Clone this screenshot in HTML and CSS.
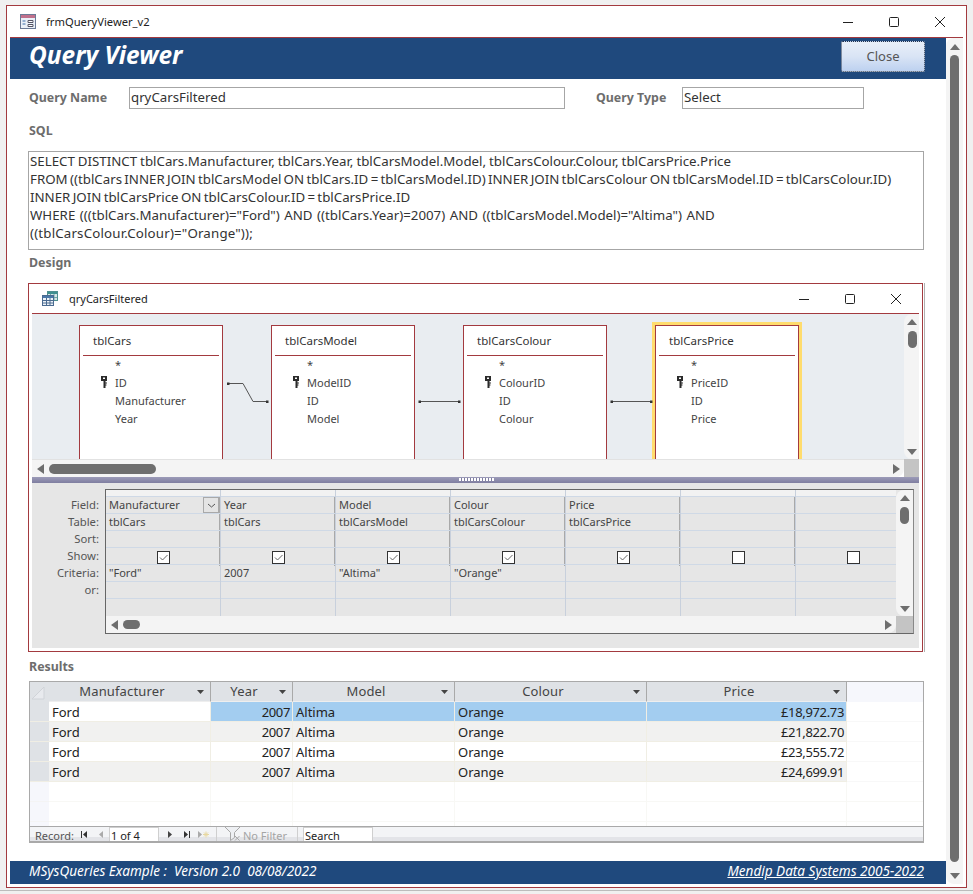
FILE: index.html
```html
<!DOCTYPE html>
<html lang="en">
<head>
<meta charset="utf-8">
<title>frmQueryViewer_v2</title>
<link rel="stylesheet" href="styles.css">
</head>
<body>
<svg class="defs" width="0" height="0">
  <defs>
    <symbol id="key" viewBox="0 0 6 12">
      <path d="M0 0h6v5h-1.500v1.500h1.500v1h-1.500v1h1v1h-1v2.500h-2v-7h-2.500z" fill="#2b2b2b"/>
      <path d="M2 1.500h2v1.500h-2z" fill="#fff"/>
    </symbol>
    <symbol id="check" viewBox="0 0 13 13">
      <rect x="0.500" y="0.500" width="12" height="12" fill="#fff" stroke="#333"/>
      <path d="M3 6.500l2.500 2.500l5-5" fill="none" stroke="#666"/>
    </symbol>
    <symbol id="uncheck" viewBox="0 0 13 13">
      <rect x="0.500" y="0.500" width="12" height="12" fill="#fff" stroke="#333"/>
    </symbol>
    <symbol id="sort" viewBox="0 0 7 4">
      <path d="M0 0h7l-3.500 4z" fill="#444"/>
    </symbol>
  </defs>
</svg>
<div class="window">
  <header class="titlebar">
    <svg class="form-icon" width="16" height="15" viewBox="0 0 16 15">
      <rect x="0.500" y="0.500" width="15" height="14" fill="#eaf0f8" stroke="#6b7a96"/>
      <rect x="1" y="1" width="14" height="3" fill="#c0708c"/>
      <path d="M2.500 7h3M2.500 10h3" stroke="#3f6fa8"/>
      <path d="M8 6.500h5v2h-5zM8 10.500h5v2h-5z" fill="#fff" stroke="#556"/>
    </svg>
    <span class="title-text">frmQueryViewer_v2</span>
    <div class="caption-btns">
      <svg width="12" height="12" viewBox="0 0 12 12"><path d="M1 6.500h10" stroke="#222"/></svg>
      <svg width="12" height="12" viewBox="0 0 12 12"><rect x="1.500" y="1.500" width="9" height="9" rx="1" fill="none" stroke="#222"/></svg>
      <svg width="12" height="12" viewBox="0 0 12 12"><path d="M1 1l10 10M11 1l-10 10" stroke="#222"/></svg>
    </div>
  </header>
  <div class="client">
    <div class="main">
      <div class="banner">
        <h1>Query Viewer</h1>
        <button class="close-btn" type="button">Close</button>
      </div>
      <div class="form">
        <div class="field-row">
          <label class="lbl lbl-name">Query Name</label>
          <div class="input input-name">qryCarsFiltered</div>
          <label class="lbl lbl-type">Query Type</label>
          <div class="input input-type">Select</div>
        </div>
        <div class="lbl section sql-label">SQL</div>
        <div class="sql">
          <span class="sql-line sql-l1">SELECT DISTINCT tblCars.Manufacturer, tblCars.Year, tblCarsModel.Model, tblCarsColour.Colour, tblCarsPrice.Price</span>
          <span class="sql-line sql-l2">FROM ((tblCars INNER JOIN tblCarsModel ON tblCars.ID = tblCarsModel.ID) INNER JOIN tblCarsColour ON tblCarsModel.ID = tblCarsColour.ID)</span>
          <span class="sql-line sql-l2">INNER JOIN tblCarsPrice ON tblCarsColour.ID = tblCarsPrice.ID</span>
          <span class="sql-line sql-l4">WHERE (((tblCars.Manufacturer)="Ford") AND ((tblCars.Year)=2007) AND ((tblCarsModel.Model)="Altima") AND</span>
          <span class="sql-line sql-l5">((tblCarsColour.Colour)="Orange"));</span>
        </div>
        <div class="lbl section design-label">Design</div>

        <section class="subwin">
          <div class="sub-title">
            <svg class="query-icon" width="16" height="15" viewBox="0 0 16 15">
              <rect x="5.500" y="0.500" width="10" height="9" fill="#d6e6e6" stroke="#4f8f8f"/>
              <rect x="6" y="1" width="9" height="2" fill="#3f8f8f"/>
              <path d="M8.500 3v6M12 3v6M6 6.500h9" stroke="#6fa5a5"/>
              <rect x="0.500" y="4.500" width="11" height="10" fill="#eef3f8" stroke="#4a6a90"/>
              <rect x="1" y="5" width="10" height="2" fill="#4a78a8"/>
              <path d="M4.500 7v7M8 7v7M1 9.500h10M1 12h10" stroke="#4a6a90"/>
            </svg>
            <span class="sub-title-text">qryCarsFiltered</span>
            <div class="caption-btns sub-btns">
              <svg width="12" height="12" viewBox="0 0 12 12"><path d="M1 6.500h10" stroke="#222"/></svg>
              <svg width="12" height="12" viewBox="0 0 12 12"><rect x="1.500" y="1.500" width="9" height="9" rx="1" fill="none" stroke="#222"/></svg>
              <svg width="12" height="12" viewBox="0 0 12 12"><path d="M1 1l10 10M11 1l-10 10" stroke="#222"/></svg>
            </div>
          </div>
          <div class="tables-area">
            <div class="canvas">
              <div class="tbl tbl-1">
                <div class="tbl-head">tblCars</div>
                <ul class="tbl-fields"><li>*</li><li class="pk"><svg class="key"><use href="#key"/></svg>ID</li><li>Manufacturer</li><li>Year</li></ul>
              </div>
              <div class="tbl tbl-2">
                <div class="tbl-head">tblCarsModel</div>
                <ul class="tbl-fields"><li>*</li><li class="pk"><svg class="key"><use href="#key"/></svg>ModelID</li><li>ID</li><li>Model</li></ul>
              </div>
              <div class="tbl tbl-3">
                <div class="tbl-head">tblCarsColour</div>
                <ul class="tbl-fields"><li>*</li><li class="pk"><svg class="key"><use href="#key"/></svg>ColourID</li><li>ID</li><li>Colour</li></ul>
              </div>
              <div class="tbl tbl-4">
                <div class="tbl-head">tblCarsPrice</div>
                <ul class="tbl-fields"><li>*</li><li class="pk"><svg class="key"><use href="#key"/></svg>PriceID</li><li>ID</li><li>Price</li></ul>
              </div>
              <svg class="joins" width="872" height="145" viewBox="0 0 872 145">
                <path d="M196 69.500h15l10 18h14" fill="none" stroke="#555"/>
                <path d="M388 87.500h39M580 87.500h39" fill="none" stroke="#555"/>
                <path d="M195 68.500h2.500v2.500h-2.500zM234 86.500h2.500v2.500h-2.500zM386.500 86.500h2.500v2.500h-2.500zM426 86.500h2.500v2.500h-2.500zM578.500 86.500h2.500v2.500h-2.500zM618 86.500h2.500v2.500h-2.500z" fill="#333"/>
              </svg>
            </div>
            <div class="vscroll v-top">
              <span class="arr arr-up"></span><span class="thumb-v"></span><span class="spacer"></span><span class="arr arr-down"></span>
            </div>
          </div>
          <div class="hscroll-row">
            <div class="hscroll">
              <span class="arr arr-left"></span><span class="thumb-h thumb-h-top"></span><span class="spacer"></span><span class="arr arr-right"></span>
            </div>
            <div class="corner"></div>
          </div>
          <div class="splitter"><span class="grip"></span></div>
          <div class="grid-area">
            <div class="grid-labels">
              <div>Field:</div><div>Table:</div><div>Sort:</div><div>Show:</div><div>Criteria:</div><div>or:</div>
            </div>
            <div class="qbe">
              <div class="qbe-body">
                <div class="qbe-cols">
                  <div class="qcol">
                    <div class="qc top"></div><div class="qc field-cell">Manufacturer<span class="combo"><svg width="9" height="5" viewBox="0 0 9 5"><path d="M1 1l3.500 3l3.500-3" fill="none" stroke="#555"/></svg></span></div><div class="qc">tblCars</div><div class="qc"></div><div class="qc show"><svg class="cb"><use href="#check"/></svg></div><div class="qc">"Ford"</div><div class="qc"></div><div class="qc last"></div>
                  </div>
                  <div class="qcol">
                    <div class="qc top"></div><div class="qc">Year</div><div class="qc">tblCars</div><div class="qc"></div><div class="qc show"><svg class="cb"><use href="#check"/></svg></div><div class="qc">2007</div><div class="qc"></div><div class="qc last"></div>
                  </div>
                  <div class="qcol">
                    <div class="qc top"></div><div class="qc">Model</div><div class="qc">tblCarsModel</div><div class="qc"></div><div class="qc show"><svg class="cb"><use href="#check"/></svg></div><div class="qc">"Altima"</div><div class="qc"></div><div class="qc last"></div>
                  </div>
                  <div class="qcol">
                    <div class="qc top"></div><div class="qc">Colour</div><div class="qc">tblCarsColour</div><div class="qc"></div><div class="qc show"><svg class="cb"><use href="#check"/></svg></div><div class="qc">"Orange"</div><div class="qc"></div><div class="qc last"></div>
                  </div>
                  <div class="qcol">
                    <div class="qc top"></div><div class="qc">Price</div><div class="qc">tblCarsPrice</div><div class="qc"></div><div class="qc show"><svg class="cb"><use href="#check"/></svg></div><div class="qc"></div><div class="qc"></div><div class="qc last"></div>
                  </div>
                  <div class="qcol">
                    <div class="qc top"></div><div class="qc"></div><div class="qc"></div><div class="qc"></div><div class="qc show"><svg class="cb"><use href="#uncheck"/></svg></div><div class="qc"></div><div class="qc"></div><div class="qc last"></div>
                  </div>
                  <div class="qcol">
                    <div class="qc top"></div><div class="qc"></div><div class="qc"></div><div class="qc"></div><div class="qc show"><svg class="cb"><use href="#uncheck"/></svg></div><div class="qc"></div><div class="qc"></div><div class="qc last"></div>
                  </div>
                </div>
                <div class="vscroll v-grid">
                  <span class="arr arr-up"></span><span class="thumb-v"></span><span class="spacer"></span><span class="arr arr-down"></span>
                </div>
              </div>
              <div class="hscroll-row grid-h">
                <div class="hscroll">
                  <span class="arr arr-left"></span><span class="thumb-h thumb-h-grid"></span><span class="spacer"></span><span class="arr arr-right"></span>
                </div>
                <div class="corner"></div>
              </div>
            </div>
          </div>
        </section>

        <div class="lbl section results-label">Results</div>
        <section class="results">
          <div class="ds-row ds-head">
            <div class="sel sel-corner"><svg width="14" height="14" viewBox="0 0 14 14"><path d="M13 1v12h-12z" fill="#e8eaee" stroke="#d0d3d8"/></svg></div>
            <div class="dc c1">Manufacturer<svg class="sort"><use href="#sort"/></svg></div>
            <div class="dc c2">Year<svg class="sort"><use href="#sort"/></svg></div>
            <div class="dc c3">Model<svg class="sort"><use href="#sort"/></svg></div>
            <div class="dc c4">Colour<svg class="sort"><use href="#sort"/></svg></div>
            <div class="dc c5">Price<svg class="sort"><use href="#sort"/></svg></div>
            <div class="dc c6"></div>
          </div>
          <div class="ds-row rec cur">
            <div class="sel"></div><div class="dc c1">Ford</div><div class="dc c2">2007</div><div class="dc c3">Altima</div><div class="dc c4">Orange</div><div class="dc c5">£18,972.73</div><div class="dc c6"></div>
          </div>
          <div class="ds-row rec alt">
            <div class="sel"></div><div class="dc c1">Ford</div><div class="dc c2">2007</div><div class="dc c3">Altima</div><div class="dc c4">Orange</div><div class="dc c5">£21,822.70</div><div class="dc c6"></div>
          </div>
          <div class="ds-row rec">
            <div class="sel"></div><div class="dc c1">Ford</div><div class="dc c2">2007</div><div class="dc c3">Altima</div><div class="dc c4">Orange</div><div class="dc c5">£23,555.72</div><div class="dc c6"></div>
          </div>
          <div class="ds-row rec alt">
            <div class="sel"></div><div class="dc c1">Ford</div><div class="dc c2">2007</div><div class="dc c3">Altima</div><div class="dc c4">Orange</div><div class="dc c5">£24,699.91</div><div class="dc c6"></div>
          </div>
          <div class="ds-row empty"><div class="sel"></div><div class="dc c1"></div><div class="dc c2"></div><div class="dc c3"></div><div class="dc c4"></div><div class="dc c5"></div><div class="dc c6"></div></div>
          <div class="ds-row empty"><div class="sel"></div><div class="dc c1"></div><div class="dc c2"></div><div class="dc c3"></div><div class="dc c4"></div><div class="dc c5"></div><div class="dc c6"></div></div>
          <div class="ds-row empty stub"><div class="sel"></div><div class="dc c1"></div><div class="dc c2"></div><div class="dc c3"></div><div class="dc c4"></div><div class="dc c5"></div><div class="dc c6"></div></div>
          <div class="navbar">
            <span class="nav-label">Record:</span>
            <svg class="nav-ico n-first" width="7" height="7" viewBox="0 0 7 7"><path d="M0.500 0v7" stroke="#333"/><path d="M6 0v7l-4-3.500z" fill="#333"/></svg>
            <svg class="nav-ico n-prev" width="5" height="7" viewBox="0 0 5 7"><path d="M4 0v7l-4-3.500z" fill="#aaa"/></svg>
            <span class="nav-box nav-count">1 of 4</span>
            <svg class="nav-ico n-next" width="5" height="7" viewBox="0 0 5 7"><path d="M0 0v7l4-3.500z" fill="#444"/></svg>
            <svg class="nav-ico n-last" width="7" height="7" viewBox="0 0 7 7"><path d="M0 0v7l4-3.500z" fill="#333"/><path d="M5.500 0v7" stroke="#333"/></svg>
            <svg class="nav-ico n-new" width="11" height="7" viewBox="0 0 11 7"><path d="M0 0v7l4-3.500z" fill="#aaa"/><path d="M8 0.500v6M5 3.500h6M6 1.500l4 4M10 1.500l-4 4" stroke="#e8d8a0"/></svg>
            <span class="nav-sep"></span>
            <svg class="nav-filter" width="18" height="15" viewBox="0 0 18 15"><path d="M0.500 0.500h16l-6 6v5l-4 3v-8z" fill="#eef0f3" stroke="#a8a8a8"/><path d="M11 10l4.500 4.500M15.500 10l-4.500 4.500" stroke="#a8a8a8"/></svg>
            <span class="nav-filter-text">No Filter</span>
            <span class="nav-sep nav-sep2"></span>
            <span class="nav-box nav-search">Search</span>
          </div>
        </section>
      </div>
      <footer class="footer">
        <span>MSysQueries Example :&nbsp; Version 2.0&nbsp; 08/08/2022</span>
        <a class="foot-link" href="#">Mendip Data Systems 2005-2022</a>
      </footer>
    </div>
    <div class="vscroll v-main">
      <span class="arr arr-up"></span><span class="thumb-v"></span><span class="arr arr-down"></span>
    </div>
  </div>
</div>
<div class="page-rule"></div>
</body>
</html>
```
FILE: styles.css
```css
* { box-sizing: border-box; }
html, body { margin: 0; padding: 0; }
body {
  background: #f0f0f0;
  height: 894px;
  overflow: hidden;
  font-family: "Noto Sans", "Open Sans", sans-serif;
  font-size: 13px;
  color: #333;
}
.defs { position: absolute; }

.window {
  margin: 5px 0 0 6px;
  width: 961px;
  height: 883px;
  background: #fff;
  border: 1px solid #a33a3f;
  padding: 0 3px 3px;
  display: flex;
  flex-direction: column;
}
.page-rule { height: 1px; margin-top: 2px; background: #bcbcbc; }
.titlebar {
  height: 32px;
  flex: none;
  border-bottom: 1px solid #a33a3f;
  display: flex;
  align-items: center;
  padding-left: 10px;
}
.form-icon { margin-right: 10px; }
.title-text { font-size: 11.2px; color: #222; }
.caption-btns {
  margin-left: auto;
  display: flex;
  gap: 34px;
  padding-right: 17px;
}

.client { flex: 1; display: flex; min-height: 0; }
.main { width: 936px; flex: none; display: flex; flex-direction: column; }

.banner {
  height: 41px;
  flex: none;
  background: #1f497d;
  display: flex;
  align-items: flex-start;
  justify-content: space-between;
  padding-left: 19px;
  padding-right: 21px;
}
.banner h1 {
  margin: 0;
  font-size: 24.4px;
  line-height: 33px;
  font-weight: 700;
  font-style: italic;
  color: #fff;
}
.close-btn {
  margin-top: 3px;
  width: 84px;
  height: 31px;
  font: 13px "Noto Sans", sans-serif;
  color: #555;
  border: 1px dotted #24334a;
  border-radius: 2px;
  background: linear-gradient(#e8eff9, #d9e4f5 50%, #bdd1f0);
  padding: 0 0 2px;
}

.form { flex: 1; padding: 8px 0 0 18px; min-height: 0; }
.lbl { font-weight: 700; color: #6d6d6d; font-size: 12.4px; }
.field-row { display: flex; align-items: center; height: 22px; }
.lbl-name { width: 101px; padding-left: 1px; padding-bottom: 2px; }
.lbl-type { width: 86px; margin-left: 31px; padding-bottom: 2px; }
.input {
  height: 22px;
  border: 1px solid #a6a6a6;
  background: #fff;
  font-size: 13.25px;
  line-height: 18px;
  padding-left: 1px;
  color: #333;
}
.input-name { width: 436px; }
.input-type { width: 182px; }
.section { padding-left: 1px; line-height: 18px; height: 18px; }
.sql-label { margin-top: 13px; }
.sql {
  margin-top: 11px;
  width: 896px;
  height: 99px;
  border: 1px solid #a6a6a6;
  padding: 0 1px;
  font-size: 13.3px;
  line-height: 18px;
  color: #333;
  white-space: nowrap;
  overflow: hidden;
}
.sql-line { display: block; }
.sql-l1 { word-spacing: -0.5px; }
.sql-l2 { word-spacing: -1.15px; }
.sql-l4 { word-spacing: 1px; }
.sql-l5 { letter-spacing: 0.17px; }
.design-label { margin-top: 4px; }

.subwin {
  margin-top: 11px;
  width: 895px;
  height: 369px;
  border: 1px solid #a33a3f;
  box-shadow: 1px 0 0 #fff, 2px 0 0 #b0b0b0;
  padding: 0 3px 3px;
  background: #fff;
  display: flex;
  flex-direction: column;
}
.sub-title {
  height: 30px;
  flex: none;
  border-bottom: 1px solid #a33a3f;
  display: flex;
  align-items: center;
  padding-left: 10px;
}
.query-icon { margin-right: 11px; }
.sub-title-text { font-size: 11px; color: #222; }
.sub-btns { padding-right: 17px; }
.tables-area { height: 145px; flex: none; display: flex; background: #e9edf1; }
.canvas { position: relative; flex: 1; overflow: hidden; }
.tbl {
  position: absolute;
  top: 11px;
  width: 144px;
  height: 170px;
  border: 1px solid #a33a3f;
  background: #fff;
  padding: 0 3px;
}
.tbl-1 { left: 47px; }
.tbl-2 { left: 239px; }
.tbl-3 { left: 431px; }
.tbl-4 { left: 623px; outline: 3px solid #ffdc6d; }
.tbl-head {
  height: 30px;
  border-bottom: 1px solid #a33a3f;
  padding-left: 10px;
  font-size: 11.5px;
  line-height: 29px;
  color: #333;
}
.tbl-fields {
  list-style: none;
  margin: 0;
  padding: 0 0 0 32px;
  font-size: 11px;
  line-height: 18px;
  color: #444;
}
.tbl-fields li { position: relative; height: 18px; }
.key { position: absolute; left: -14px; top: 2px; width: 6px; height: 12px; }
.joins { position: absolute; left: 0; top: 0; pointer-events: none; }

.vscroll {
  width: 15px;
  flex: none;
  display: flex;
  flex-direction: column;
  align-items: center;
  background: #f4f4f4;
  border-radius: 8px 0 0 8px;
}
.v-top { padding-left: 1px; }
.spacer { flex: 1; }
.arr { width: 0; height: 0; flex: none; display: block; border-style: solid; border-color: transparent; }
.arr-up { border-width: 0 5px 6px; border-bottom-color: #6e6e6e; margin-top: 5px; }
.arr-down { border-width: 6px 5px 0; border-top-color: #6e6e6e; margin-bottom: 4px; }
.arr-left { border-width: 5px 7px 5px 0; border-right-color: #6e6e6e; margin-left: 5px; }
.arr-right { border-width: 5px 0 5px 7px; border-left-color: #6e6e6e; margin-right: 4px; }
.thumb-v { width: 9px; height: 17px; background: #6e6e6e; border-radius: 5px; margin-top: 6px; }
.hscroll-row { height: 18px; flex: none; display: flex; }
.hscroll {
  flex: 1;
  display: flex;
  align-items: center;
  background: #f4f4f4;
  border-top: 1px solid #e2e2e2;
  border-radius: 0 0 8px 0;
}
.corner { width: 15px; background: #c4c4c4; }
.thumb-h { height: 9px; background: #6e6e6e; border-radius: 5px; margin-left: 5px; }
.thumb-h-top { width: 107px; height: 10px; }
.thumb-h-grid { width: 17px; }
.splitter {
  height: 6px;
  flex: none;
  background: linear-gradient(#9c9bb8, #7f7ea0);
  display: flex;
  justify-content: center;
}
.grip {
  width: 35px;
  height: 3px;
  margin-top: 1px;
  margin-left: 2px;
  background: repeating-linear-gradient(90deg, #fff 0 2px, #7f7ea0 2px 3px);
}

.grid-area { flex: 1; background: #e6e6e6; display: flex; padding: 6px 0 0 0; min-height: 0; }
.grid-labels {
  width: 73px;
  flex: none;
  padding-top: 7px;
  font-size: 11.3px;
  color: #555;
  text-align: right;
  padding-right: 6px;
  line-height: 17px;
}
.grid-labels div { height: 17px; }
.qbe {
  width: 809px;
  height: 145px;
  border: 1px solid #666;
  border-right-color: #888;
  display: flex;
  flex-direction: column;
  flex: none;
}
.qbe-body { flex: 1; display: flex; min-height: 0; }
.qbe-cols { flex: 1; min-width: 0; display: flex; overflow: hidden; }
.qcol {
  width: 115px;
  flex: none;
  border-right: 1px solid #c8d0dc;
  background: linear-gradient(#a9a9a9, #a9a9a9) right top / 1px 76px no-repeat;
}
.qc {
  height: 17px;
  border-bottom: 1px solid #cfd9e6;
  padding-left: 3px;
  font-size: 11px;
  line-height: 16px;
  color: #444;
  position: relative;
  white-space: nowrap;
}
.qc.top { height: 7px; background: #f2f2f2; }
.qc.last { border-bottom: 0; height: 16px; }
.qc.show { display: flex; align-items: center; justify-content: center; padding-left: 0; }
.cb { width: 13px; height: 13px; margin-top: 2px; }
.field-cell .combo {
  position: absolute;
  right: 1px;
  top: 0;
  width: 16px;
  height: 16px;
  background: #e4e4e4;
  border: 1px solid #a9a9a9;
  display: flex;
  align-items: center;
  justify-content: center;
}
.v-grid { width: 17px; }
.grid-h { height: 17px; }
.grid-h .corner { width: 17px; }
.grid-h .hscroll { border-top: 0; }

.results-label { margin-top: 6px; height: 17px; line-height: 17px; }
.results {
  margin: 6px 0 0 1px;
  width: 895px;
  height: 162px;
  border: 1px solid #a9a9a9;
  border-bottom-width: 2px;
  display: flex;
  flex-direction: column;
  background: #fff;
  font-size: 13px;
}
.ds-row { display: flex; height: 20px; flex: none; }
.ds-head { background: #dfe2e6; height: 20px; font-size: 13px; }
.sel {
  width: 19px;
  flex: none;
  background: #dfe2e6;
  border-bottom: 1px solid #f0eee4;
}
.sel-corner { display: flex; align-items: flex-end; padding: 0 0 2px 1px; border: 0; }
.empty .sel { background: #f6f7fc; border-bottom-color: #f4f4f4; }
.dc {
  border-right: 1px solid #f0eee4;
  border-bottom: 1px solid #f0eee4;
  padding: 0 2px 0 3px;
  line-height: 20px;
  color: #222;
  white-space: nowrap;
  overflow: hidden;
}
.c1 { width: 162px; }
.c2 { width: 82px; text-align: right; letter-spacing: -0.35px; }
.c3 { width: 162px; }
.c4 { width: 192px; }
.c5 { width: 200px; text-align: right; letter-spacing: -0.35px; }
.c6 { flex: 1; border-right: 0; border-bottom-color: #f8f8f8; }
.empty .dc { border-color: #f8f8f5; }
.ds-head .dc {
  position: relative;
  text-align: center;
  padding: 0 15px 0 0;
  color: #444;
  border-right-color: #a9a9a9;
  border-bottom-color: #eee;
  letter-spacing: 0.15px;
  line-height: 19px;
}
.ds-head .c6 { background: #f6f7fc; border: 0; }
.sort { position: absolute; right: 6px; top: 8px; width: 7px; height: 4px; }
.cur .c2, .cur .c3, .cur .c4, .cur .c5 { background: #a3cdf0; }
.alt .dc:not(.c6) { background: #f1f1f0; }
.stub { height: 4px; }
.stub .dc, .stub .sel { border-bottom: 0; }
.navbar {
  flex: 1;
  background: linear-gradient(#f3f4f6 0 10px, #e3e4e8 10px);
  border-top: 1px solid #a9a9a9;
  display: flex;
  align-items: center;
  font-size: 11px;
  min-height: 0;
  padding-left: 5px;
}
.nav-label { color: #555; width: 46px; margin-top: 2px; }
.nav-ico { flex: none; }
.n-prev { margin-left: 11px; }
.nav-box {
  background: #fff;
  height: 14px;
  line-height: 15px;
  border: 1px solid #cfcfcf;
  border-bottom: 0;
  color: #222;
  padding-left: 1px;
  align-self: flex-end;
}
.nav-count { width: 50px; margin-left: 5px; margin-right: 9px; }
.n-last { margin-left: 11px; }
.n-new { margin-left: 7px; }
.nav-sep { width: 1px; height: 14px; background: #cfcfcf; margin-left: 7px; align-self: flex-end; }
.nav-filter { margin-left: 7px; align-self: flex-end; flex: none; }
.nav-filter-text { color: #a5a5a5; margin-left: 1px; width: 54px; margin-top: 2px; }
.nav-sep2 { margin-left: 0; }
.nav-search { width: 70px; margin-left: 5px; }

.footer {
  height: 23px;
  flex: none;
  background: #1f497d;
  color: #fff;
  font-style: italic;
  font-size: 13.55px;
  line-height: 20px;
  display: flex;
  justify-content: space-between;
  padding: 0 22px 0 19px;
}
.foot-link { color: #fff; text-decoration: underline; }

.v-main { width: 17px; }
.v-main .arr-up { margin-top: 6px; }
.v-main .thumb-v { flex: 1; margin-top: 5px; margin-bottom: 11px; }
.v-main .arr-down { margin-bottom: 5px; }
```
